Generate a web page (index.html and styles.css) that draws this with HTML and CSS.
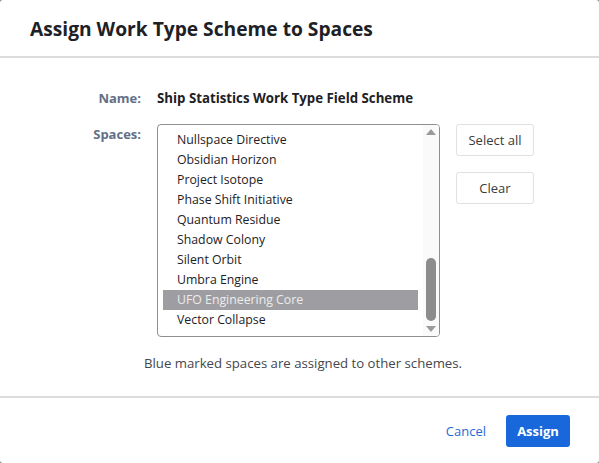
FILE: index.html
```html
<!DOCTYPE html>
<html>
<head>
<meta charset="utf-8">
<link rel="stylesheet" href="styles.css">
</head>
<body>
<div class="dialog">
  <div class="header"><h1 class="title">Assign Work Type Scheme to Spaces</h1></div>
  <div class="content">
    <div class="form">
      <div class="label">Name:</div>
      <div class="value">Ship Statistics Work Type Field Scheme</div>
      <div></div>
      <div class="label spaces-label">Spaces:</div>
      <div class="listbox">
        <div class="items">
          <div class="item item-partial">Nova Sapling</div>
          <div class="item">Nullspace Directive</div>
          <div class="item">Obsidian Horizon</div>
          <div class="item">Project Isotope</div>
          <div class="item">Phase Shift Initiative</div>
          <div class="item">Quantum Residue</div>
          <div class="item">Shadow Colony</div>
          <div class="item">Silent Orbit</div>
          <div class="item">Umbra Engine</div>
          <div class="item selected">UFO Engineering Core</div>
          <div class="item">Vector Collapse</div>
        </div>
        <div class="scrollbar">
          <svg class="arrow" width="12" height="10" viewBox="0 0 12 10"><path d="M1 8 L6 2 L11 8 Z" fill="#9a9a9a"/></svg>
          <div class="track"><div class="thumb"></div></div>
          <svg class="arrow" width="12" height="10" viewBox="0 0 12 10"><path d="M1 2 L6 8 L11 2 Z" fill="#9a9a9a"/></svg>
        </div>
      </div>
      <div class="side-buttons">
        <button class="btn">Select all</button>
        <button class="btn">Clear</button>
      </div>
    </div>
    <p class="hint">Blue marked spaces are assigned to other schemes.</p>
  </div>
  <div class="footer">
    <button class="link-btn">Cancel</button>
    <button class="primary-btn">Assign</button>
  </div>
</div>
</body>
</html>
```

FILE: styles.css
```css
* { box-sizing: border-box; }
html, body { margin: 0; padding: 0; }
body {
  background: #8a8a8a;
  font-family: "Open Sans", "Noto Sans", sans-serif;
  font-size: 13px;
  color: #172b4d;
}
.dialog {
  width: 599px;
  height: 463px;
  background: #fff;
  border-radius: 3px;
  display: flex;
  flex-direction: column;
}
.header {
  height: 58px;
  padding: 0 30px;
  border-bottom: 2px solid #dcdcdc;
  display: flex;
  align-items: center;
}
.title {
  margin: 0;
  font-size: 19.2px;
  font-weight: 700;
  color: #1d2125;
}
.content {
  padding-top: 30px;
  height: 340px;
  border-bottom: 2px solid #dcdcdc;
}
.form {
  display: grid;
  grid-template-columns: 141px 283px auto;
  column-gap: 16px;
  row-gap: 16px;
  align-items: start;
}
.label {
  text-align: right;
  font-weight: 700;
  color: #626f86;
  line-height: 20px;
}
.value {
  font-weight: 700;
  font-size: 13.25px;
  color: #1d2125;
  line-height: 20px;
  white-space: nowrap;
}
.listbox {
  height: 213px;
  border: 1px solid #8f8f8f;
  border-radius: 4px;
  display: flex;
  overflow: hidden;
}
.items {
  flex: 1;
  padding: 0 5px;
  overflow: hidden;
}
.item {
  height: 20px;
  line-height: 20px;
  padding-left: 14px;
  font-size: 12.3px;
  color: #1d2125;
  white-space: nowrap;
}
.item-partial {
  margin-top: -15px;
  line-height: 16px;
}
.item.selected {
  background: #9e9ea2;
  color: #ececec;
}
.scrollbar {
  width: 16px;
  background: #fafafa;
  display: flex;
  flex-direction: column;
  align-items: center;
  padding: 2px 0;
}
.arrow { display: block; flex: none; }
.track {
  flex: 1;
  width: 100%;
  display: flex;
  flex-direction: column;
  justify-content: flex-end;
  align-items: center;
  padding: 2px 0 3px;
}
.thumb {
  width: 10px;
  height: 63px;
  border-radius: 5px;
  background: #8c8c8c;
}
.side-buttons {
  display: flex;
  flex-direction: column;
  gap: 16px;
  align-items: flex-start;
}
.btn {
  width: 78px;
  height: 32px;
  border: 1px solid #dfe1e6;
  border-radius: 3px;
  background: #fff;
  font-family: inherit;
  font-size: 13px;
  color: #3b3b3b;
  padding: 0;
}
.hint {
  margin: 16px 0 0;
  text-align: center;
  padding-left: 7px;
  line-height: 20px;
  font-size: 13.2px;
  color: #44474d;
}
.footer {
  flex: 1;
  display: flex;
  justify-content: flex-end;
  align-items: center;
  padding: 0 29px 0 0;
  gap: 10px;
}
.link-btn {
  background: none;
  border: none;
  font-family: inherit;
  font-size: 13px;
  color: #1f6ad3;
  padding: 0 10px;
  height: 32px;
}
.primary-btn {
  width: 64px;
  height: 32px;
  border: none;
  border-radius: 3px;
  background: #1868db;
  color: #fff;
  font-family: inherit;
  font-size: 13px;
  font-weight: 700;
  padding: 0;
}
```
